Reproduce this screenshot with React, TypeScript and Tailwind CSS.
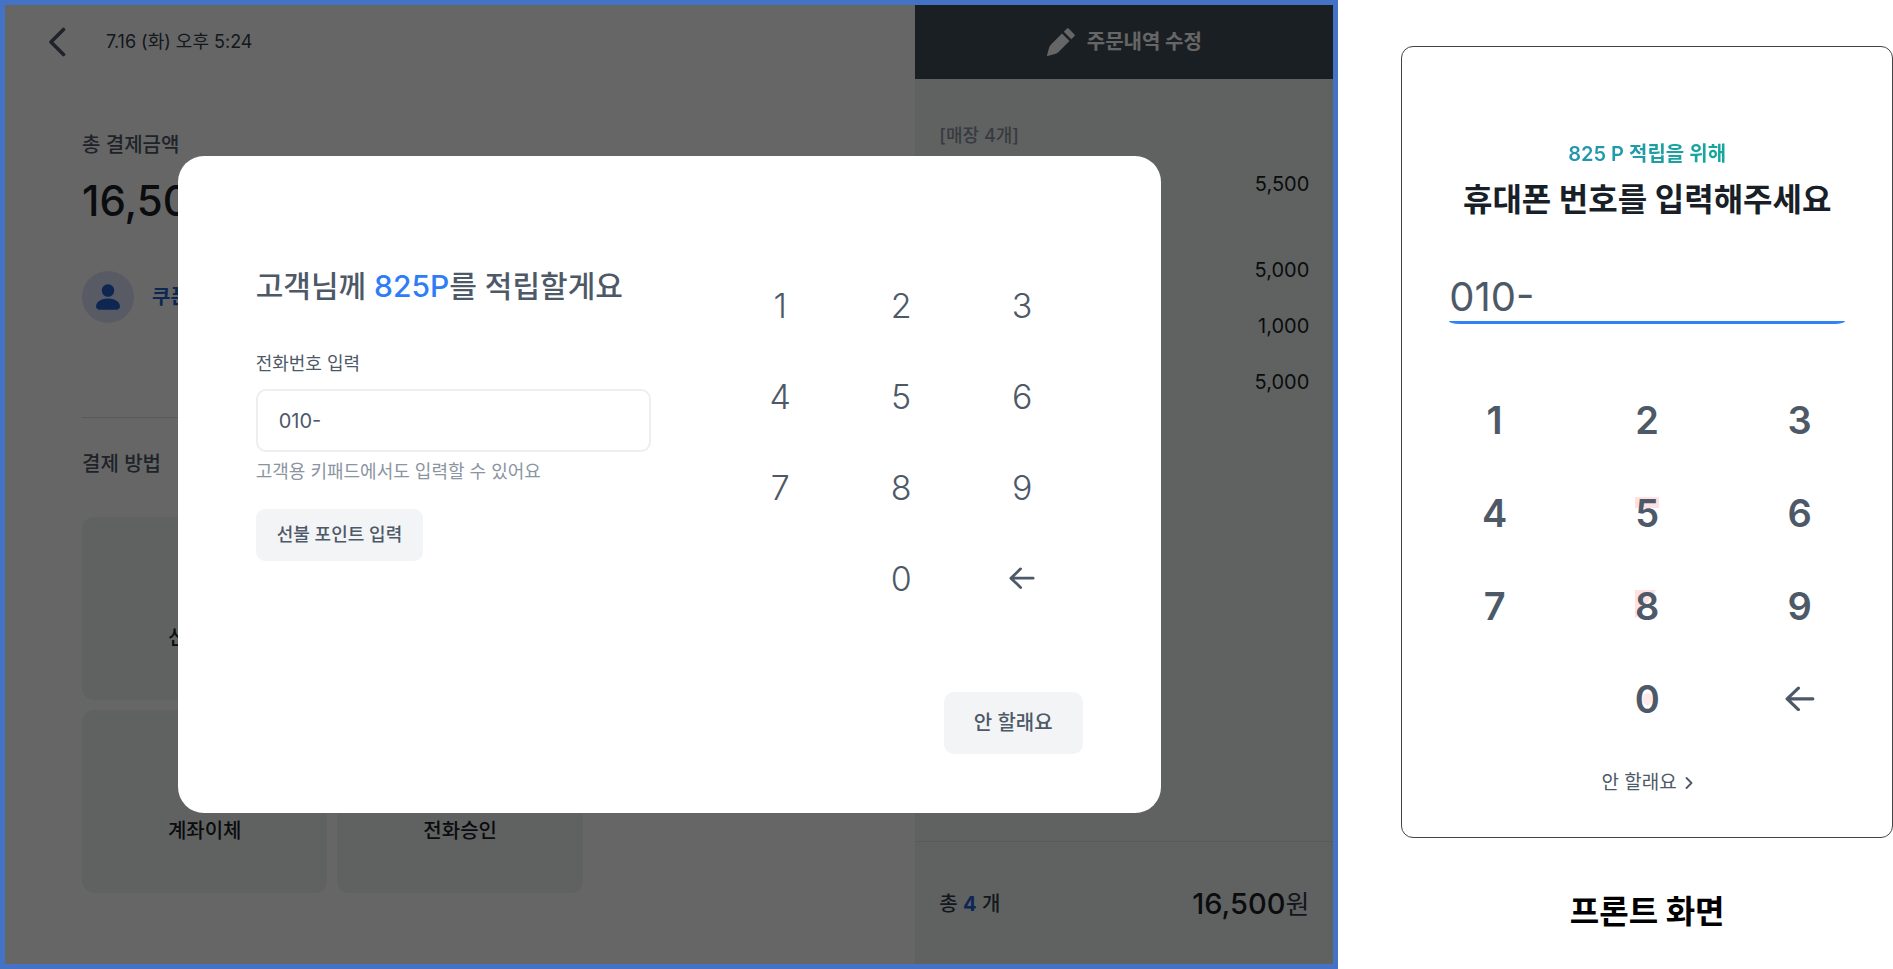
import { useState } from "react";

const paymentMethods = [["신용카드"], ["계좌이체", "전화승인"]];

const orderPrices = [
    { price: "5,500", height: "h-[86px]" },
    { price: "5,000", height: "h-14" },
    { price: "1,000", height: "h-14" },
    { price: "5,000", height: "h-14" },
];

const keys = ["1", "2", "3", "4", "5", "6", "7", "8", "9", "", "0", "back"];

// Faint pink marks behind the middle column of the customer keypad
const tints: Record<string, string> = {
    "5": "bg-linear-to-b from-[#ffe1e1] from-35% to-transparent to-35%",
    "8": "bg-linear-to-br from-[#ffe1e1] from-45% to-transparent to-45%",
    "0": "bg-radial from-[#ffe9e9] from-25% to-transparent to-30%",
};

type KeypadProps = {
    onPress: (key: string) => void;
    className: string;
    rowClassName: string;
    arrowClassName: string;
    tinted?: boolean;
};

function BackArrow({ className }: { className: string }) {
    return (
        <svg
            viewBox="0 0 28 24"
            className={className}
            fill="none"
            stroke="currentColor"
            strokeWidth="3"
            strokeLinecap="round"
            strokeLinejoin="round"
            aria-hidden="true"
        >
            <path d="M26 12H2.5M12.5 2 2 12l10.5 10" />
        </svg>
    );
}

function Keypad({ onPress, className, rowClassName, arrowClassName, tinted }: KeypadProps) {
    return (
        <div className={`grid grid-cols-3 text-[#4e5968] ${className}`}>
            {keys.map((key) =>
                key === "" ? (
                    <span key="blank" />
                ) : (
                    <button
                        key={key}
                        type="button"
                        aria-label={key === "back" ? "지우기" : undefined}
                        onClick={() => onPress(key)}
                        className={`flex items-center justify-center ${rowClassName}`}
                    >
                        {key === "back" ? (
                            <BackArrow className={arrowClassName} />
                        ) : (
                            <span className={`leading-8 ${tinted ? (tints[key] ?? "") : ""}`}>{key}</span>
                        )}
                    </button>
                )
            )}
        </div>
    );
}

export default function App() {
    // Both screens show the same number
    const [phone, setPhone] = useState("010-");

    const handlePress = (key: string) => {
        setPhone((prev) => (key === "back" ? prev.slice(0, -1) : prev + key));
    };

    return (
        <div className="flex min-h-screen items-stretch bg-white font-['Inter','Noto_Sans_CJK_KR',sans-serif] text-[#191f28]">
            {/* Staff screen */}
            <div className="relative flex w-[70.7%] shrink-0 border-[5px] border-[#4472c4] bg-white">
                <main className="flex-1 px-[77px] pb-[71px]">
                    <header className="-ml-[34px] flex h-[73px] items-center gap-10">
                        <button type="button" aria-label="뒤로" className="text-[#4e5968]">
                            <svg
                                viewBox="0 0 18 30"
                                className="h-[30px] w-[18px]"
                                fill="none"
                                stroke="currentColor"
                                strokeWidth="3.6"
                                strokeLinecap="round"
                                strokeLinejoin="round"
                            >
                                <path d="M15.5 2.5 3 15l12.5 12.5" />
                            </svg>
                        </button>
                        <time className="text-lg text-[#333d4b]">7.16 (화) 오후 5:24</time>
                    </header>

                    <h2 className="mt-[53px] text-xl leading-7 font-medium text-[#4e5968]">총 결제금액</h2>
                    <p className="mt-4 text-[42px] leading-[52px] font-medium">16,500원</p>
                    <div className="mt-11 flex items-center gap-[18px]">
                        <span className="flex size-[52px] items-center justify-center rounded-full bg-[#dbe4f8]">
                            <svg viewBox="0 0 24 26" className="h-[26px] w-6" fill="#2161cc" aria-hidden="true">
                                <circle cx="12" cy="6.5" r="6.3" />
                                <path d="M0 22.5C0 17.5 5.5 14.5 12 14.5s12 3 12 8c0 2.500-2 3.300-5 3.300H5c-3 0-5-.8-5-3.300Z" />
                            </svg>
                        </span>
                        <a href="#coupon" className="text-xl font-bold text-[#2161cc]">쿠폰 적립</a>
                    </div>

                    <hr className="mt-[94px] border-[#dadfe2]" />

                    <h2 className="mt-8 text-xl leading-7 font-medium text-[#4e5968]">결제 방법</h2>
                    <div className="mt-[39px] flex flex-col gap-[10px]">
                        {paymentMethods.map((row, index) => (
                            <div key={index} className="grid grid-cols-3 gap-[10px]">
                                {row.map((name) => (
                                    <button
                                        key={name}
                                        type="button"
                                        className="flex h-[183px] items-end justify-center rounded-xl bg-[#f0f4f2] pb-12 text-xl leading-7 font-medium"
                                    >
                                        {name}
                                    </button>
                                ))}
                            </div>
                        ))}
                    </div>
                </main>

                <aside className="flex w-[418px] flex-col bg-[#f0f4f2]">
                    <button
                        type="button"
                        className="flex h-[74px] items-center justify-center gap-3 bg-[#414e58] text-xl font-bold text-white"
                    >
                        <svg viewBox="0 0 28 28" className="size-7" fill="currentColor" aria-hidden="true">
                            <path d="M15 5.5 22.5 13 11.5 24Q10 25.5 8 26L.5 28Q0 28 0 27.5L2 20Q2.5 18 4 16.5Z" />
                            <path d="M16.8 3.7 20 .5Q20.8-.2 21.6.5L27.5 6.4Q28.200 7.200 27.500 8L24.300 11.200Z" />
                        </svg>
                        주문내역 수정
                    </button>
                    <div className="flex-1 px-6 pt-[43px]">
                        <p className="text-lg leading-7 font-medium text-[#8b95a1]">[매장 4개]</p>
                        <ul className="mt-5 text-right text-xl leading-7">
                            {orderPrices.map((item, index) => (
                                <li key={index} className={item.height}>
                                    {item.price}
                                </li>
                            ))}
                        </ul>
                    </div>
                    <div className="flex h-[123px] items-center justify-between border-t border-[#dfe2e2] px-6 pt-0.5">
                        <p className="text-xl font-medium text-[#333d4b]">
                            총 <b className="text-[#2161cc]">4</b> 개
                        </p>
                        <p className="text-[29px] font-medium">
                            16,500<span className="text-[26px] font-normal text-[#333d4b]">원</span>
                        </p>
                    </div>
                </aside>

                {/* Point dialog */}
                <div className="absolute inset-0 flex items-center justify-center bg-black/60">
                    <section
                        role="dialog"
                        aria-labelledby="point-title"
                        className="w-[74%] rounded-[26px] bg-white px-[78px] pt-[104px] pb-[59px]"
                    >
                        <div className="flex justify-between">
                            <div className="w-[395px]">
                                <h1 id="point-title" className="mt-1 text-[30px] leading-[44px] font-medium text-[#4e5968]">
                                    고객님께 <span className="text-[#2f7df6]">825P</span>를 적립할게요
                                </h1>
                                <label htmlFor="phone" className="mt-[42px] block text-lg leading-7 text-[#4e5968]">
                                    전화번호 입력
                                </label>
                                <input
                                    id="phone"
                                    type="tel"
                                    value={phone}
                                    onChange={(e) => setPhone(e.target.value)}
                                    className="mt-[11px] block h-[63px] w-full rounded-[10px] border-2 border-[#eceef0] px-[21px] text-xl text-[#4e5968] outline-none"
                                />
                                <p className="mt-1.5 text-lg leading-7 text-[#8b95a1]">고객용 키패드에서도 입력할 수 있어요</p>
                                <button
                                    type="button"
                                    className="mt-[23px] h-[52px] rounded-[9px] bg-[#f2f4f6] px-[21px] text-lg font-medium text-[#4e5968]"
                                >
                                    선불 포인트 입력
                                </button>
                            </div>
                            <Keypad
                                onPress={handlePress}
                                className="w-[363px] text-[34px] font-light"
                                rowClassName="h-[91px]"
                                arrowClassName="w-[26px]"
                            />
                        </div>
                        <div className="mt-[68px] flex justify-end">
                            <button
                                type="button"
                                className="h-[62px] rounded-[10px] bg-[#f2f4f6] px-[30px] text-xl font-medium text-[#4e5968]"
                            >
                                안 할래요
                            </button>
                        </div>
                    </section>
                </div>
            </div>

            {/* Customer screen */}
            <div className="min-w-0 flex-1 pt-[46px] pl-[63px]">
                <section className="flex flex-col rounded-xl border border-[#444] pt-[93px] pb-10 text-center">
                    <p className="mx-auto bg-linear-to-r from-[#2594ae] to-[#14a79b] bg-clip-text text-xl leading-7 font-semibold text-transparent">
                        825 P 적립을 위해
                    </p>
                    <h2 className="mt-2 text-[32px] leading-[48px] font-bold">휴대폰 번호를 입력해주세요</h2>
                    <input
                        type="tel"
                        aria-label="휴대폰 번호"
                        value={phone}
                        onChange={(e) => setPhone(e.target.value)}
                        className="mx-[47px] mt-11 h-14 min-w-0 [border-radius:0_0_10px_10px/0_0_3px_3px] border-b-[3px] border-[#3182f6] pt-1 text-[40px] text-[#4e5968] outline-none"
                    />
                    <Keypad
                        onPress={handlePress}
                        className="mx-4 mt-[49px] text-[38px] font-semibold"
                        rowClassName="h-[93px]"
                        arrowClassName="w-[30px]"
                        tinted
                    />
                    <button
                        type="button"
                        className="mx-auto mt-6 flex items-center gap-2 text-[19px] leading-7 text-[#4e5968]"
                    >
                        안 할래요
                        <svg
                            viewBox="0 0 8 12"
                            className="h-3 w-2"
                            fill="none"
                            stroke="currentColor"
                            strokeWidth="1.8"
                            strokeLinecap="round"
                            strokeLinejoin="round"
                            aria-hidden="true"
                        >
                            <path d="m1.5 1 5 5-5 5" />
                        </svg>
                    </button>
                </section>
                <p className="mt-[50px] text-center text-[32px] leading-[48px] font-bold text-black">프론트 화면</p>
            </div>
        </div>
    );
}
